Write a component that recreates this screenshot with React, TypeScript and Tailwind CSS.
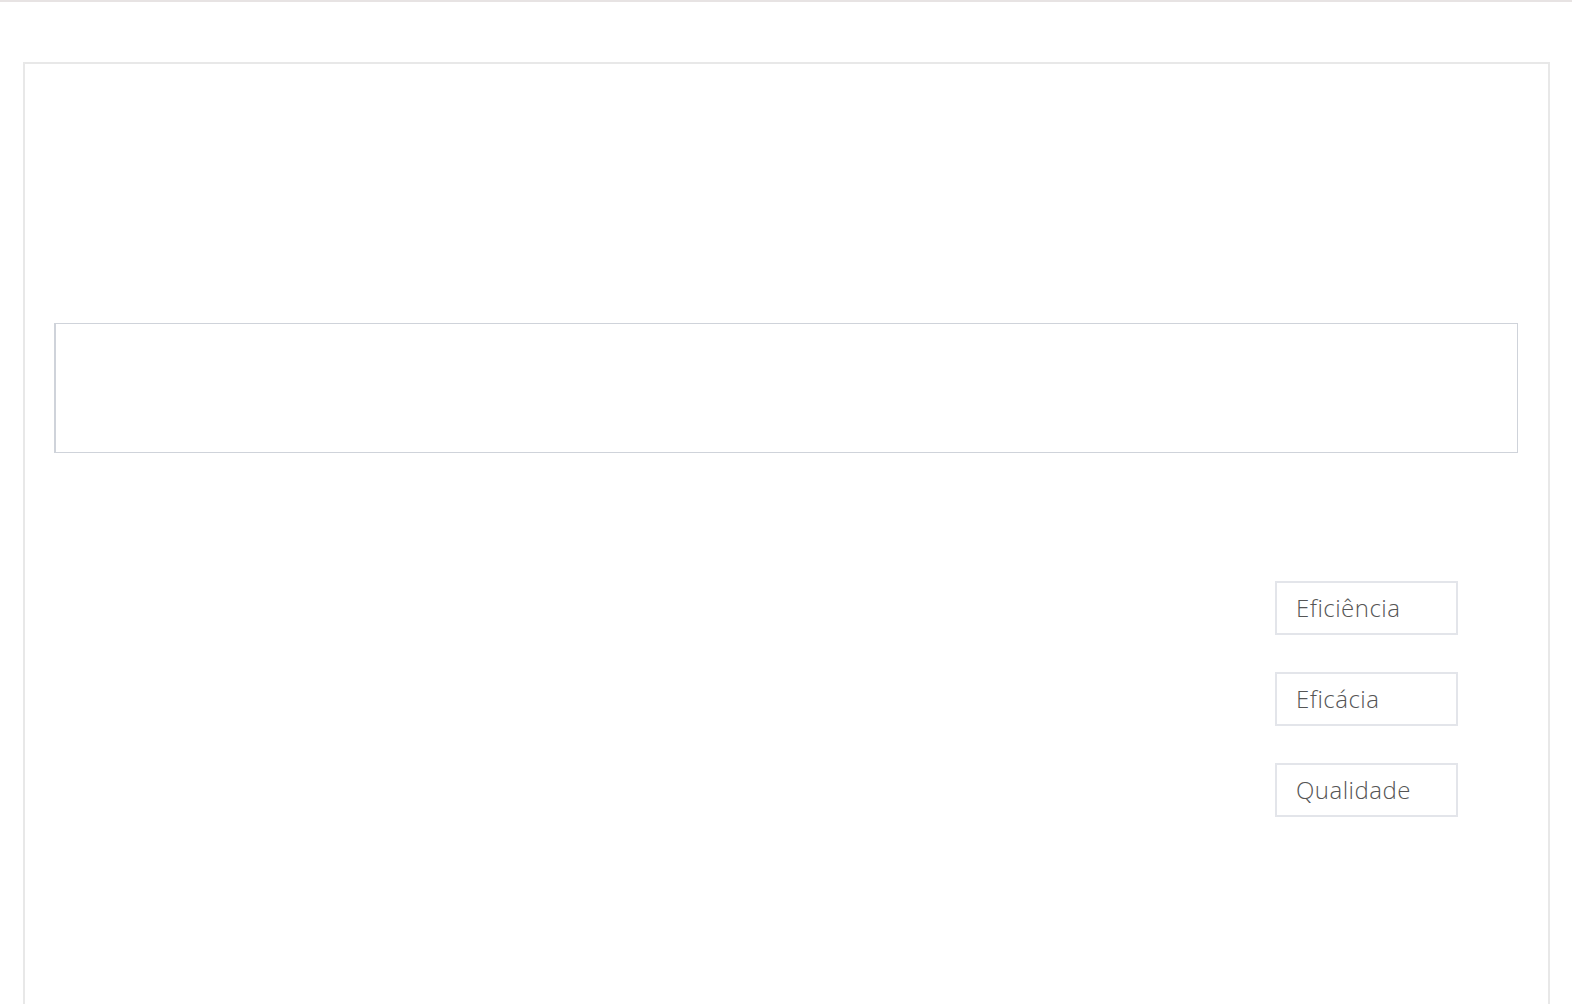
import React from "react";

const metrics = ["Eficiência", "Eficácia", "Qualidade"];

function MetricButton({ label }: { label: string }) {
  return (
    <button
      type="button"
      className="h-[54px] w-[183px] border-2 border-[#e3e5ea] bg-white pl-[19px] text-left font-['Open_Sans',sans-serif] text-[24px] font-light tracking-[0.02em] text-[#555]"
    >
      {label}
    </button>
  );
}

export default function App() {
  return (
    <div className="min-h-screen overflow-hidden border-t-2 border-[#e7e3e3] bg-white">
      <div className="ml-[23px] mr-[22px] mt-[60px] h-[1100px] border-2 border-[#e8e8e8] pl-[29px] pr-[30px] pt-[259px]">
        <div className="h-[130px] border border-l-2 border-[#cfd3da]" />
        <div className="mt-[128px] flex flex-col items-end gap-[37px] pr-[60px]">
          {metrics.map((m) => (
            <MetricButton key={m} label={m} />
          ))}
        </div>
      </div>
    </div>
  );
}
